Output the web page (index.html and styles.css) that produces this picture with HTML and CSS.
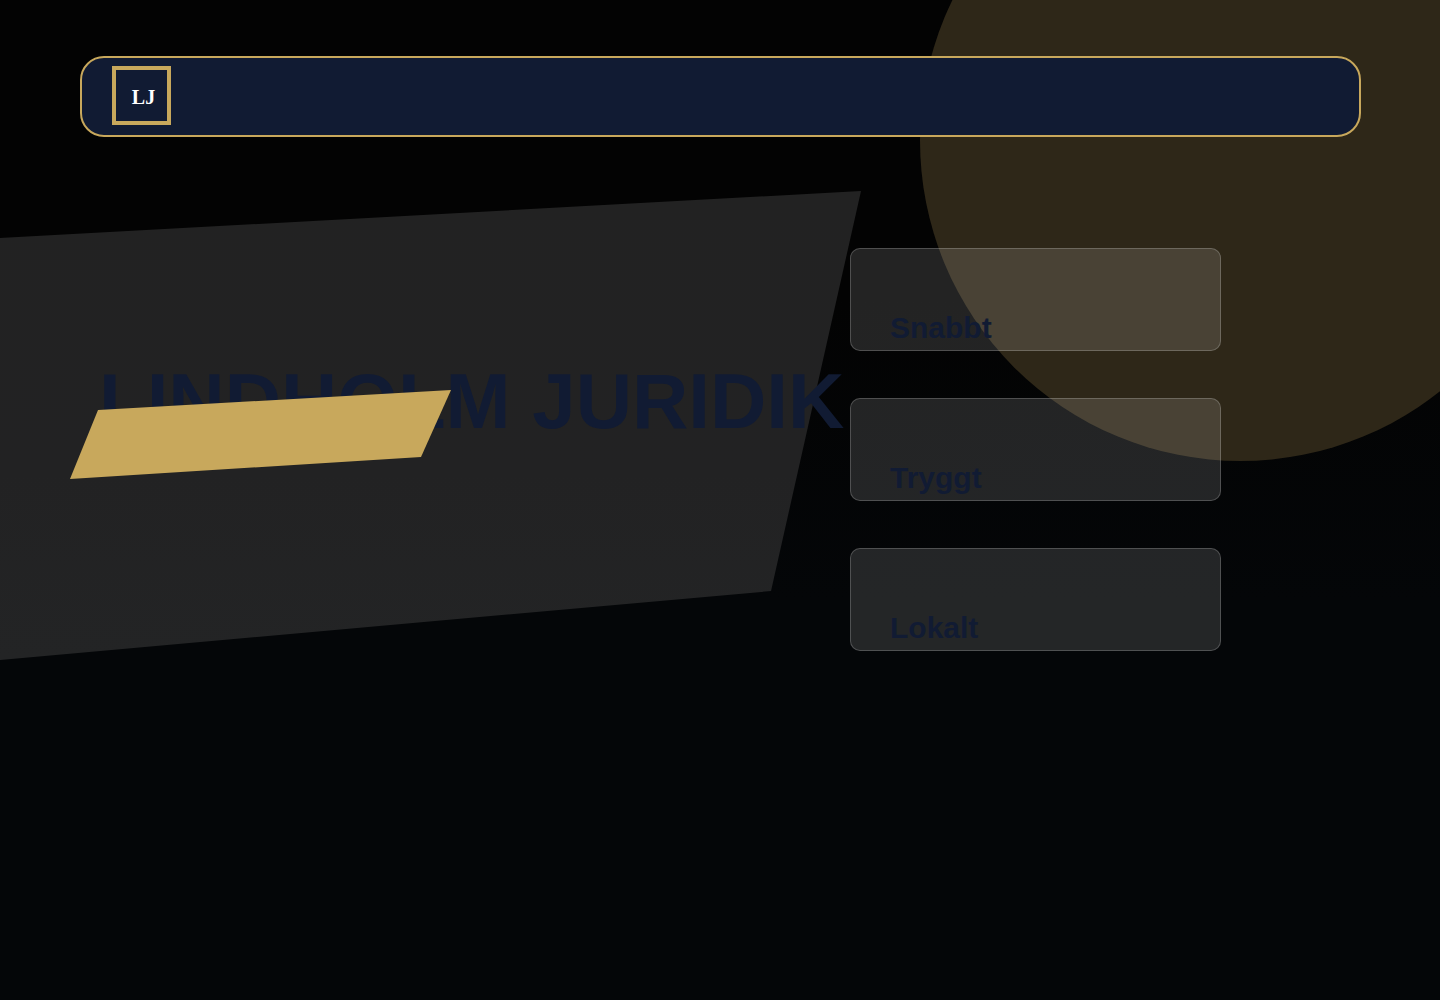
FILE: index.html
```html
<!DOCTYPE html>
<html lang="sv">
<head>
  <meta charset="UTF-8">
  <meta name="viewport" content="width=device-width, initial-scale=1.0">
  <title>Lindholm Juridik</title>
  <link rel="stylesheet" href="styles.css">
</head>
<body>
  <div class="page">
    <div class="circle"></div>

    <header class="navbar">
      <a class="logo" href="#">LJ</a>
    </header>

    <main class="hero">
      <div class="panel"></div>
      <div class="hero-title">
        <h1>LINDHOLM JURIDIK</h1>
        <div class="ribbon"></div>
      </div>
      <div class="cards">
        <section class="card"><h2>Snabbt</h2></section>
        <section class="card"><h2>Tryggt</h2></section>
        <section class="card"><h2>Lokalt</h2></section>
      </div>
    </main>
  </div>
</body>
</html>
```

FILE: styles.css
```css
* {
  box-sizing: border-box;
}

body {
  margin: 0;
  font-family: "Liberation Sans", Arial, sans-serif;
  color: #111b33;
  background: #040608;
}

.page {
  position: relative;
  min-height: 100vh;
  padding-top: 56px;
  overflow: hidden;
  background: linear-gradient(#030303, #030303 30%, #040608 60%);
}

/* background shapes */
.circle {
  position: absolute;
  top: -180px;
  right: -121px;
  width: 641px;
  height: 641px;
  border-radius: 50%;
  background: #2e2718;
}

.panel {
  position: absolute;
  top: 54px;
  left: 0;
  width: 861px;
  height: 469px;
  background: linear-gradient(#222222, #222223 60%, #232425);
  clip-path: polygon(0 47px, 100% 0, 771px 400px, 0 100%);
}

.navbar {
  position: relative;
  display: flex;
  align-items: flex-start;
  height: 81px;
  margin: 0 79px 0 80px;
  padding: 8px 30px;
  border: 2px solid #c8a85c;
  border-radius: 24px;
  background: #111b33;
}

.logo {
  display: flex;
  align-items: center;
  justify-content: center;
  width: 59px;
  height: 59px;
  padding: 2px 0 0 4px;
  border: 4px solid #c8a85c;
  font-family: "Liberation Serif", Georgia, serif;
  font-size: 20px;
  line-height: 24px;
  font-weight: bold;
  color: #fff;
  text-decoration: none;
}

.hero {
  position: relative;
  display: grid;
  grid-template-columns: 1fr 371px;
  padding: 111px 219px 48px 99px;
}

.hero-title {
  position: relative;
  padding-top: 108px;
}

h1 {
  margin: 0;
  font-size: 78px;
  line-height: 90px;
  white-space: nowrap;
}

.ribbon {
  position: absolute;
  top: 142px;
  left: -29px;
  width: 381px;
  height: 89px;
  background: #c8a85c;
  clip-path: polygon(28px 20px, 100% 0, 351px 67px, 0 100%);
}

.cards {
  position: relative;
  display: grid;
  gap: 47px;
}

.card {
  display: flex;
  align-items: flex-end;
  height: 103px;
  padding: 0 39px 6px;
  border: 1px solid rgba(255, 255, 255, 0.2);
  border-radius: 10px;
  background: rgba(255, 255, 255, 0.13);
}

.card h2 {
  margin: 0;
  font-size: 30px;
  line-height: 32px;
}
```
